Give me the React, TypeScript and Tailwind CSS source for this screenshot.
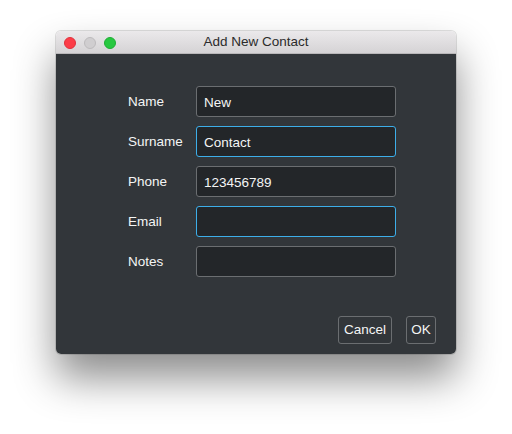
import React, { useState } from 'react';

const fields = [
  { label: 'Name', value: 'New', focus: false },
  { label: 'Surname', value: 'Contact', focus: true },
  { label: 'Phone', value: '123456789', focus: false },
  { label: 'Email', value: '', focus: true },
  { label: 'Notes', value: '', focus: false },
];

export default function App() {
  const [values, setValues] = useState(fields.map((f) => f.value));

  return (
    <div className="min-h-screen w-full bg-white flex justify-center pt-[31px] font-['Liberation_Sans',Arial,sans-serif]">
      <div className="w-[400px] h-[323px] flex flex-col rounded-[5px] overflow-hidden shadow-[0_24px_42px_rgba(0,0,0,0.45),0_0_0_1px_rgba(0,0,0,0.12)]">
        {/* title bar */}
        <div className="relative h-[23px] flex items-center justify-center bg-gradient-to-b from-[#ebe9eb] to-[#d5d3d5] border-b border-[#b9b7b9]">
          <div className="absolute left-[8px] top-[6px] flex gap-[8px]">
            <span className="w-[12px] h-[12px] rounded-full bg-[#fc3d48] border border-[#e0313c]" />
            <span className="w-[12px] h-[12px] rounded-full bg-[#d0ced0] border border-[#bdbbbd]" />
            <span className="w-[12px] h-[12px] rounded-full bg-[#27c840] border border-[#1eae34]" />
          </div>
          <span className="text-[13.5px] text-[#2b2b2b] leading-none">Add New Contact</span>
        </div>

        {/* body */}
        <div className="flex-1 flex flex-col bg-[#32363a]">
          <div className="pt-[32px] pl-[72px] flex flex-col gap-[9px]">
            {fields.map((f, i) => (
              <div key={f.label} className="flex items-center">
                <label className="w-[68px] pt-[2px] text-[13.5px] text-[#f4f5f5]">{f.label}</label>
                <input
                  value={values[i]}
                  onChange={(e) => {
                    const next = [...values];
                    next[i] = e.target.value;
                    setValues(next);
                  }}
                  className={
                    f.focus
                      ? 'w-[200px] h-[31px] rounded-[3px] bg-[#232629] border border-[#3daee9] px-[7px] pt-[1px] text-[13.5px] text-[#f4f5f5] outline-none'
                      : 'w-[200px] h-[31px] rounded-[3px] bg-[#232629] border border-[#6b6e71] px-[7px] pt-[1px] text-[13.5px] text-[#f4f5f5] outline-none'
                  }
                />
              </div>
            ))}
          </div>

          <div className="mt-auto flex justify-end gap-[14px] pr-[20px] pb-[10px]">
            <button className="h-[28px] w-[54px] rounded-[3px] border border-[#6b6e71] text-[13.5px] text-[#f4f5f5]">
              Cancel
            </button>
            <button className="h-[28px] w-[30px] rounded-[3px] border border-[#6b6e71] text-[13.5px] text-[#f4f5f5]">
              OK
            </button>
          </div>
        </div>
      </div>
    </div>
  );
}
